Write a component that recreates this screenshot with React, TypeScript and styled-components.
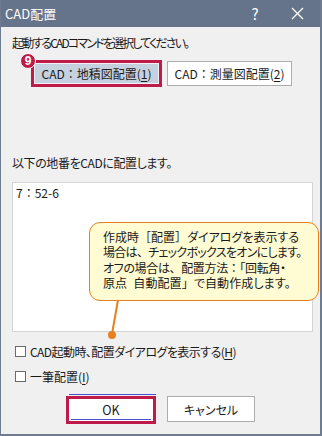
import React from 'react'
import styled, { createGlobalStyle } from 'styled-components'

const GlobalStyle = createGlobalStyle`
  html, body {
    margin: 0;
    padding: 0;
    background: #f0f0f0;
  }
  body {
    font-family: "Noto Sans CJK JP", "Noto Sans", sans-serif;
    color: #1a1a1a;
  }
`

const Window = styled.div`
  position: relative;
  width: 322px;
  height: 436px;
  box-sizing: border-box;
  background: #f0f0f0;
  border-left: 1px solid #6f7c8f;
  border-right: 2px solid #6f7c8f;
  border-bottom: 2px solid #6f7c8f;
  display: flex;
  flex-direction: column;
  overflow: hidden;
`

const TitleBar = styled.div`
  height: 27px;
  flex: none;
  background: #65748a;
  color: #fff;
  display: flex;
  align-items: center;
  padding-left: 4px;
  font-size: 13px;
`

const TitleText = styled.span`
  flex: 1;
`

const TitleButton = styled.span<{ $w: number }>`
  width: ${({ $w }) => $w}px;
  text-align: center;
  font-size: 15px;
  display: flex;
  justify-content: center;
  align-items: center;
`

const Content = styled.div`
  padding: 0 7px 0 11px;
  display: flex;
  flex-direction: column;
  font-size: 12px;
`

// narrow kana like the dialog's UI font
const Label = styled.div<{ $mt: number; $ls: number }>`
  margin-top: ${({ $mt }) => $mt}px;
  line-height: 14px;
  height: 14px;
  white-space: nowrap;
  font-feature-settings: "palt";
  letter-spacing: ${({ $ls }) => $ls}px;
`

const ButtonRow = styled.div`
  margin-top: 10px;
  display: flex;
  align-items: center;
  gap: 5px;
  padding-left: 19px;
`

const Highlight = styled.div<{ $w: number; $h: number }>`
  width: ${({ $w }) => $w}px;
  height: ${({ $h }) => $h}px;
  box-sizing: border-box;
  border: 3px solid #be1b4b;
  padding: 1px;
  display: flex;
`

const CmdButton = styled.div<{ $selected?: boolean }>`
  box-sizing: border-box;
  display: flex;
  align-items: center;
  justify-content: center;
  font-size: 12px;
  white-space: nowrap;
  ${({ $selected }) =>
    $selected
      ? `
    flex: 1;
    background: #c6d1df;
  `
      : `
    width: 125px;
    height: 25px;
    background: #fff;
    border: 1px solid #adadad;
  `}
`

const U = styled.span`
  text-decoration: underline;
  text-underline-offset: 2px;
`

const ListBox = styled.div`
  margin-top: 12px;
  width: 301px;
  height: 150px;
  box-sizing: border-box;
  background: #fff;
  border: 1px solid #d4d4d4;
  padding: 2px 3px;
  font-size: 12px;
  line-height: 16px;
`

const CheckRow = styled.div<{ $mt: number }>`
  margin-top: ${({ $mt }) => $mt}px;
  display: flex;
  align-items: center;
  gap: 4px;
  padding-left: 3px;
  height: 14px;
  white-space: nowrap;
`

const CheckBox = styled.span`
  width: 11px;
  height: 11px;
  box-sizing: border-box;
  border: 1px solid #6a6a6a;
  background: #fff;
  flex: none;
`

const CheckText = styled.span<{ $ls: number }>`
  font-feature-settings: "palt";
  letter-spacing: ${({ $ls }) => $ls}px;
`

const Footer = styled.div`
  margin-top: 13px;
  display: flex;
  align-items: flex-end;
  padding-left: 54px;
  gap: 11px;
`

const OkWrap = styled.div`
  position: relative;
  width: 90px;
  height: 28px;
  box-sizing: border-box;
  border: 3px solid #be1b4b;
  background: #fff;
  display: flex;
  align-items: center;
  justify-content: center;
  font-size: 12.5px;
  padding-bottom: 1px;
  &::before {
    content: '';
    position: absolute;
    left: 0;
    right: -3px;
    top: -5px;
    height: 1px;
    background: #4a4fd2;
  }
  &::after {
    content: '';
    position: absolute;
    left: 2px;
    right: 2px;
    bottom: 1px;
    height: 1px;
    background: #4a4fd2;
  }
`

const PlainButton = styled.div`
  width: 88px;
  height: 26px;
  margin-bottom: 2px;
  box-sizing: border-box;
  border: 1px solid #adadad;
  background: #fff;
  display: flex;
  align-items: center;
  justify-content: center;
  font-size: 12px;
  font-feature-settings: "palt";
`

const Badge = styled.div`
  position: absolute;
  left: 19px;
  top: 53px;
  width: 16px;
  height: 16px;
  border-radius: 50%;
  background: #be1b4b;
  border: 1px solid #fff;
  box-sizing: border-box;
  color: #fff;
  font-family: "Liberation Sans", Arial, sans-serif;
  font-weight: bold;
  font-size: 12px;
  display: flex;
  align-items: center;
  justify-content: center;
`

const Callout = styled.div`
  position: absolute;
  left: 88px;
  top: 222px;
  width: 230px;
  height: 79px;
  box-sizing: border-box;
  border: 1.5px solid #e8801f;
  border-radius: 11px;
  background: #fffbd2;
  padding: 6px 0 0 13px;
  font-size: 12px;
  line-height: 15.3px;
  color: #1a1a1a;
  white-space: nowrap;
  font-feature-settings: "palt";
`

const CalloutLine = styled.div<{ $ls: number }>`
  letter-spacing: ${({ $ls }) => $ls}px;
`

// full-width punctuation keeps its em box
const P = styled.span`
  font-feature-settings: normal;
`

const Connector = styled.svg`
  position: absolute;
  left: 100px;
  top: 299px;
  overflow: visible;
`

export default function App() {
  return (
    <>
      <GlobalStyle />
      <Window>
        <TitleBar>
          <TitleText>CAD配置</TitleText>
          <TitleButton $w={38}>?</TitleButton>
          <TitleButton $w={46}>
            <svg width="13" height="13" viewBox="0 0 13 13">
              <path d="M1 1 L12 12 M12 1 L1 12" stroke="#fff" strokeWidth="1.3" />
            </svg>
          </TitleButton>
        </TitleBar>
        <Content>
          <Label $mt={9} $ls={-1.85}>起動するCADコマンドを選択してください。</Label>
          <ButtonRow>
            <Highlight $w={131} $h={27}>
              <CmdButton $selected>
                CAD：地積図配置(<U>1</U>)
              </CmdButton>
            </Highlight>
            <CmdButton>
              CAD：測量図配置(<U>2</U>)
            </CmdButton>
          </ButtonRow>
          <Label $mt={69} $ls={-0.4}>以下の地番をCADに配置します。</Label>
          <ListBox>7：52-6</ListBox>
          <CheckRow $mt={12}>
            <CheckBox />
            <CheckText $ls={-0.55}>
              CAD起動時、配置ダイアログを表示する(<U>H</U>)
            </CheckText>
          </CheckRow>
          <CheckRow $mt={11}>
            <CheckBox />
            <CheckText $ls={0}>
              一筆配置(<U>I</U>)
            </CheckText>
          </CheckRow>
          <Footer>
            <OkWrap>OK</OkWrap>
            <PlainButton>キャンセル</PlainButton>
          </Footer>
        </Content>
        <Badge>9</Badge>
        <Callout>
          <CalloutLine $ls={0}>
            作成時<P>［</P>配置<P>］</P>ダイアログを表示する
          </CalloutLine>
          <CalloutLine $ls={-0.7}>
            場合は<P>、</P>チェックボックスをオンにします。
          </CalloutLine>
          <CalloutLine $ls={-0.35}>
            オフの場合は<P>、</P>配置方法<P>：「</P>回転角・
          </CalloutLine>
          <CalloutLine $ls={0.1}>
            原点{'\u2002'}自動配置<P>」</P>で自動作成します。
          </CalloutLine>
        </Callout>
        <Connector width="30" height="42">
          <line x1="17" y1="1" x2="11" y2="35" stroke="#e8801f" strokeWidth="2" />
          <circle cx="11" cy="36" r="4" fill="#e8801f" />
        </Connector>
      </Window>
    </>
  )
}
